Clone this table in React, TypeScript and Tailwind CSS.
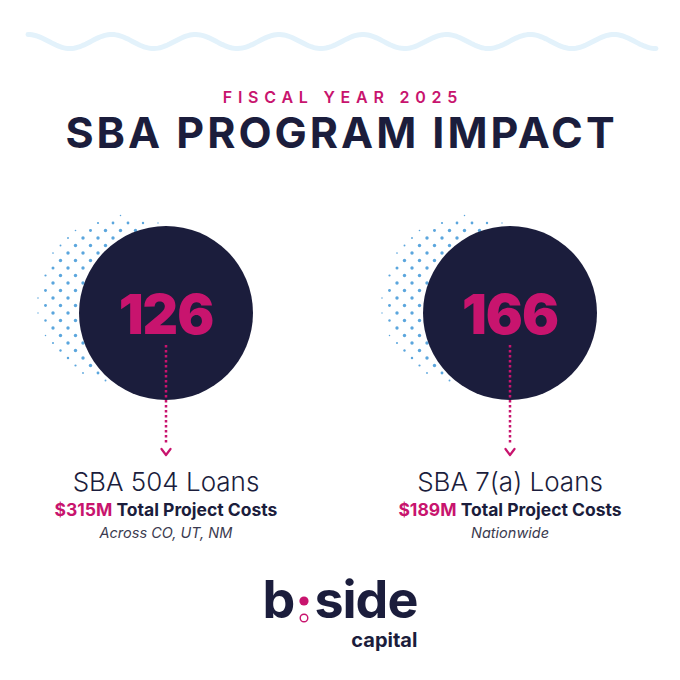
const navy = '#1b1d3c'

function wavePath() {
  // sine wave across the top of the card
  const pts: string[] = []
  for (let x = 28; x <= 656; x += 2) {
    const y = 41.5 - 7 * Math.cos(((x - 28) / 83.7) * Math.PI * 2)
    pts.push(`${x === 28 ? 'M' : 'L'}${x},${y.toFixed(2)}`)
  }
  return pts.join(' ')
}

function DotCloud() {
  const dots: { x: number; y: number; r: number }[] = []
  for (let a = -14; a <= 14; a++) {
    for (let b = -2; b <= 24; b++) {
      if ((a + b) % 2 !== 0) continue
      const x = 66 + 7.5 * a
      const y = 13 + 7.5 * b
      const d = Math.hypot(x - 90, y - 90)
      if (d > 85) continue
      const r = d < 74 ? 1.7 : 1.7 - ((d - 74) / 11) * 1.0
      dots.push({ x, y, r })
    }
  }
  return (
    <svg
      width="180"
      height="180"
      viewBox="0 0 180 180"
      className="absolute left-[-47px] top-[-16px]"
    >
      {dots.map((d, i) => (
        <circle key={i} cx={d.x} cy={d.y} r={d.r} fill="#5ba6dd" />
      ))}
    </svg>
  )
}

function DottedArrow() {
  const rects = []
  for (let y = 0; y < 100; y += 5) {
    rects.push(<rect key={y} x="4.75" y={y} width="2.5" height="2.5" fill="#c8146e" />)
  }
  return (
    <svg
      width="12"
      height="114"
      viewBox="0 0 12 114"
      className="absolute left-[81px] top-[119px]"
    >
      {rects}
      <polyline
        points="1.5,104 6,110 10.5,104"
        fill="none"
        stroke="#c8146e"
        strokeWidth="2.2"
        strokeLinecap="round"
        strokeLinejoin="round"
      />
    </svg>
  )
}

interface StatProps {
  value: string
  title: string
  amount: string
  note: string
}

function Stat({ value, title, amount, note }: StatProps) {
  return (
    <div className="flex w-[260px] flex-col items-center">
      <div className="relative h-[174px] w-[174px]">
        <DotCloud />
        <div className="relative flex h-[174px] w-[174px] items-center justify-center rounded-full bg-[#1b1d3c]">
          <span className="mt-[2px] text-[55px] leading-none font-black tracking-[-1px] text-[#c8146e]">
            {value}
          </span>
        </div>
        <DottedArrow />
      </div>
      <div className="mt-[66px] text-[26px] leading-[32px] font-light whitespace-nowrap text-[#1b1d3c]">
        {title}
      </div>
      <div className="mt-[1px] text-[17.5px] leading-[22px] font-bold whitespace-nowrap text-[#1b1d3c]">
        <span className="text-[#c8146e]">{amount}</span> Total Project Costs
      </div>
      <div className="mt-[3px] text-[14.5px] leading-[18px] italic whitespace-nowrap text-[#3b3b4f]">
        {note}
      </div>
    </div>
  )
}

export default function App() {
  return (
    <div
      className="flex h-[680px] w-[680px] flex-col items-center overflow-hidden bg-white"
      style={{ fontFamily: 'Inter, "Open Sans", sans-serif', color: navy }}
    >
      <svg width="680" height="60" viewBox="0 0 680 60" className="block shrink-0">
        <path d={wavePath()} fill="none" stroke="#e3f2fb" strokeWidth="5" strokeLinecap="round" />
      </svg>

      <div className="mt-[27px] pl-[0.36em] text-[16px] leading-[20px] font-semibold tracking-[0.36em] text-[#c8146e]">
        FISCAL YEAR 2025
      </div>
      <h1 className="mt-[1px] pl-[3px] text-[43px] leading-[48px] font-bold tracking-[3px] text-[#1b1d3c]">
        SBA PROGRAM IMPACT
      </h1>

      <div className="mt-[70px] flex w-full justify-center gap-[84px] pr-[4px]">
        <Stat value="126" title="SBA 504 Loans" amount="$315M" note="Across CO, UT, NM" />
        <Stat value="166" title="SBA 7(a) Loans" amount="$189M" note="Nationwide" />
      </div>

      <div className="mt-[35px] flex flex-col items-end">
        <div className="flex items-center text-[52px] leading-[46px] font-bold tracking-[-1px] text-[#1b1d3c]">
          <span>b</span>
          <svg width="18" height="46" viewBox="0 0 18 46" className="mx-[1px]">
            <circle cx="9" cy="24" r="4.6" fill="#c8146e" />
            <circle cx="9" cy="41" r="3.8" fill="none" stroke="#c8146e" strokeWidth="1.4" />
          </svg>
          <span>side</span>
        </div>
        <div className="mt-[5px] text-[20px] leading-[24px] font-bold text-[#1b1d3c]">capital</div>
      </div>
    </div>
  )
}
